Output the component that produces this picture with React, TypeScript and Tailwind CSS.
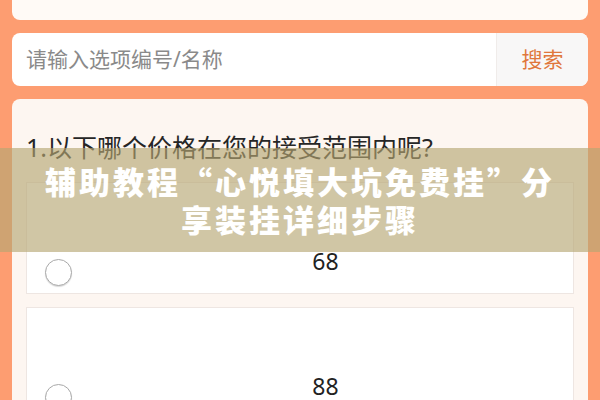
import React from 'react'

const options = ['68', '88']

function Option({ label }: { label: string }) {
  return (
    <div className="flex h-[112px] shrink-0 items-end border border-[#eee6e2] bg-white px-[18px]">
      <span className="mb-[7px] h-[27px] w-[27px] shrink-0 rounded-full border-[1.5px] border-[#a9a9a9] bg-white shadow-[0_1px_1px_rgba(0,0,0,0.15)]" />
      <div className="mb-[17px] flex flex-1 justify-center pl-[24px] text-[23px] leading-[30px] text-[#222]">{label}</div>
    </div>
  )
}

export default function App() {
  return (
    <div
      className="relative h-[400px] w-[600px] overflow-hidden bg-[#fd9d71]"
      style={{ fontFamily: '"Noto Sans", "Noto Sans CJK SC", sans-serif' }}
    >
      <div className="flex flex-col px-3">
        {/* top card, cut off */}
        <div className="h-[20px] rounded-b-lg bg-[#fffaf6]" />

        {/* search */}
        <div className="mt-[13px] flex h-[53px] overflow-hidden rounded-lg bg-white">
          <div className="flex flex-1 items-center pl-[14px] text-[21px] text-[#8a8a8a]">请输入选项编号/名称</div>
          <div className="flex w-[92px] items-center justify-center border-l border-[#f0ecea] bg-[#f8f7f7] text-[21px] text-[#e0773c]">
            搜索
          </div>
        </div>

        {/* question */}
        <div className="mt-[13px] flex h-[320px] flex-col rounded-t-lg bg-[#fdf6f1] px-[14px] pt-[30px]">
          <div className="text-[25px] leading-[36px] text-[#262626]">1.以下哪个价格在您的接受范围内呢?</div>
          <div className="mt-[17px] flex flex-col gap-[13px]">
            {options.map((o) => (
              <Option key={o} label={o} />
            ))}
          </div>
        </div>
      </div>

      {/* overlay banner */}
      <div
        className="absolute left-0 right-0 top-[148px] flex h-[104px] flex-col items-center justify-center bg-[rgba(181,166,114,0.64)] text-center text-[31px] font-black leading-[38px] tracking-[3px] text-white"
        style={{ fontFamily: '"Noto Sans CJK SC", sans-serif' }}
      >
        <div>辅助教程“心悦填大坑免费挂”分</div>
        <div>享装挂详细步骤</div>
      </div>
    </div>
  )
}
